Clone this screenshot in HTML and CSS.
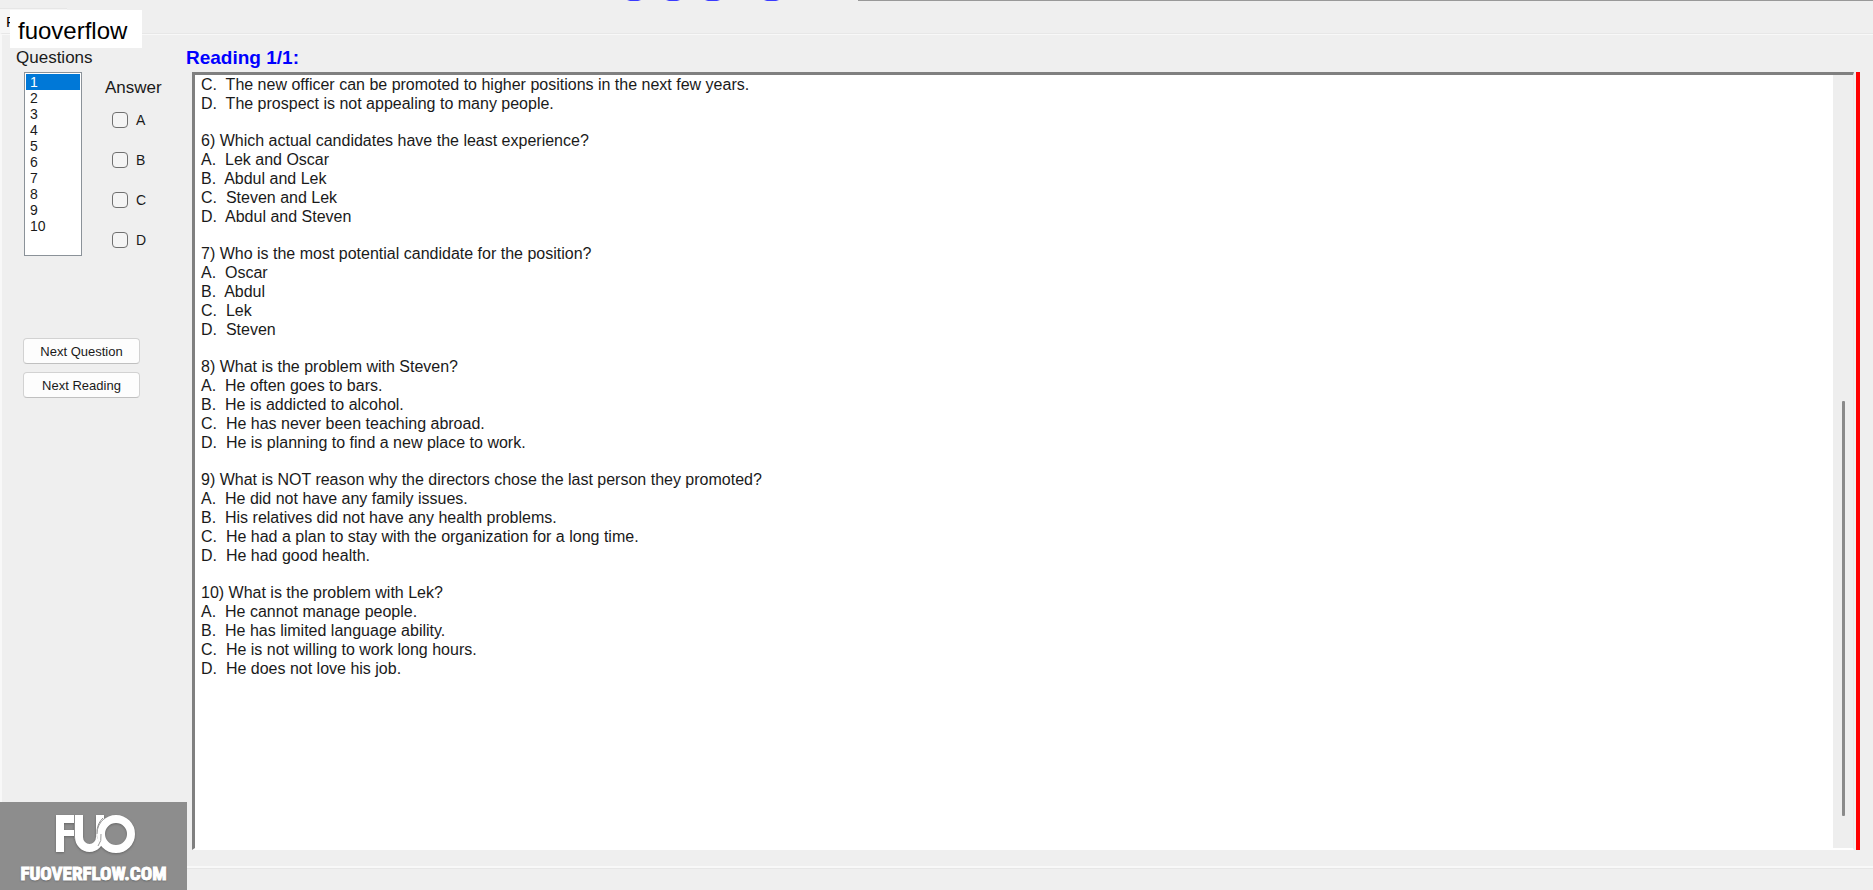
FILE: index.html
```
<!DOCTYPE html>
<html lang="en">
<head>
<meta charset="utf-8">
<title>Reading 1/1</title>
<link rel="stylesheet" href="styles.css">
</head>
<body>
<div class="app">
  <header class="tabs">
    <svg class="clipped-code" width="160" height="2" viewBox="0 0 160 2" aria-hidden="true">
      <g fill="#3a3aff"><path d="M0 0h14l-3 1H3z"/><path d="M39 0h14l-3 1h-8z"/><path d="M78 0h15l-3 1h-9z"/><path d="M137 0h15l-3 1h-9z"/></g>
    </svg>
    <div class="top-rule"></div>
    <button class="tab" type="button">R</button>
    <div class="tag">fuoverflow</div>
  </header>
  <main class="page">
    <aside class="side">
      <label class="heading" for="questions">Questions</label>
      <div class="picker">
        <select class="list" id="questions" size="10">
          <option selected>1</option><option>2</option><option>3</option><option>4</option><option>5</option><option>6</option><option>7</option><option>8</option><option>9</option><option>10</option>
        </select>
        <fieldset class="answers">
          <legend class="heading">Answer</legend>
          <label class="choice"><input type="checkbox">A</label>
          <label class="choice"><input type="checkbox">B</label>
          <label class="choice"><input type="checkbox">C</label>
          <label class="choice"><input type="checkbox">D</label>
        </fieldset>
      </div>
      <div class="actions">
        <button class="btn" type="button">Next Question</button>
        <button class="btn" type="button">Next Reading</button>
      </div>
    </aside>
    <section class="reading">
      <h1 class="title">Reading 1/1:</h1>
      <div class="frame">
        <div class="box">
          <div class="text">
            <p>C.&nbsp; The new officer can be promoted to higher positions in the next few years.<br>D.&nbsp; The prospect is not appealing to many people.</p>
            <p>6) Which actual candidates have the least experience?<br>A.&nbsp; Lek and Oscar<br>B.&nbsp; Abdul and Lek<br>C.&nbsp; Steven and Lek<br>D.&nbsp; Abdul and Steven</p>
            <p>7) Who is the most potential candidate for the position?<br>A.&nbsp; Oscar<br>B.&nbsp; Abdul<br>C.&nbsp; Lek<br>D.&nbsp; Steven</p>
            <p>8) What is the problem with Steven?<br>A.&nbsp; He often goes to bars.<br>B.&nbsp; He is addicted to alcohol.<br>C.&nbsp; He has never been teaching abroad.<br>D.&nbsp; He is planning to find a new place to work.</p>
            <p>9) What is NOT reason why the directors chose the last person they promoted?<br>A.&nbsp; He did not have any family issues.<br>B.&nbsp; His relatives did not have any health problems.<br>C.&nbsp; He had a plan to stay with the organization for a long time.<br>D.&nbsp; He had good health.</p>
            <p>10) What is the problem with Lek?<br>A.&nbsp; He cannot manage people.<br>B.&nbsp; He has limited language ability.<br>C.&nbsp; He is not willing to work long hours.<br>D.&nbsp; He does not love his job.</p>
          </div>
          <div class="track"><div class="thumb"></div></div>
        </div>
        <div class="marker"></div>
      </div>
    </section>
  </main>
  <footer class="bottom"></footer>
  <div class="watermark">
    <svg class="logo" width="82" height="42" viewBox="0 0 82 42" role="img" aria-label="FUO">
      <path d="M3 2h19v8H11v7h11v6H11v16H3z" fill="#fff"/>
      <g fill="none" stroke="#fff" stroke-width="8">
        <path d="M26 2v22a10.500 11 0 0 0 21 0V2"/>
      </g>
      <path d="M21.500 2v24M50 5a20 20 0 0 0-3 25" fill="none" stroke="#8d8d8d"/>
      <circle cx="63" cy="21" r="15" fill="none" stroke="#fff" stroke-width="8"/>
      <path d="M52 5q-8 6-8 16M48 21q1 7-3 12" fill="none" stroke="#9a9a9a"/>
    </svg>
    <div class="site">FUOVERFLOW.COM</div>
  </div>
</div>
</body>
</html>
```
FILE: styles.css
```
* { box-sizing: border-box; }
body {
  margin: 0;
  background: #efefef;
  color: #1a1a1a;
  font-family: "Liberation Sans", Arial, sans-serif;
  font-size: 16px;
}
.app {
  position: relative;
  display: flex;
  flex-direction: column;
  min-height: 100vh;
}
.tabs {
  position: relative;
  height: 33px;
  padding-top: 8px;
}
.clipped-code { position: absolute; left: 627px; top: 0; }
.top-rule {
  position: absolute;
  left: 858px;
  right: 0;
  top: 0;
  height: 1px;
  background: #999;
}
.tab {
  width: 67px;
  height: 25px;
  padding: 0 0 0 6px;
  border: 0;
  border-top: 1px solid #e6e6e6;
  background: #f6f6f6;
  font: 15px "Liberation Sans", Arial, sans-serif;
  text-align: left;
  overflow: hidden;
}
.tag {
  position: absolute;
  left: 10px;
  top: 10px;
  z-index: 1;
  padding: 4px 15px 0 8px;
  background: #fff;
  color: #000;
  font-size: 24px;
  line-height: 34px;
}
.page {
  flex: 1;
  display: flex;
  padding-top: 14px;
  border-top: 1px solid #e7e7e7;
  border-left: 2px solid #f8f8f8;
  box-shadow: inset 0 1px #f8f8f8;
}
.side {
  flex: none;
  width: 184px;
  padding-left: 14px;
}
.heading {
  display: block;
  padding: 0;
  font-size: 17px;
  line-height: 20px;
}
.picker {
  display: flex;
  gap: 23px;
  padding: 4px 0 0 8px;
}
.list {
  width: 58px;
  height: 184px;
  padding: 1px;
  border: 1px solid #8b9299;
  border-radius: 0;
  background: #fff;
  color: #1a1a1a;
  font: 14px "Liberation Sans", Arial, sans-serif;
  overflow: hidden;
}
.list option {
  min-height: 16px;
  padding: 0 0 0 4px;
}
.list option:checked {
  background: #0078d7 linear-gradient(#0078d7, #0078d7);
  -webkit-text-fill-color: #fff;
}
.answers {
  margin: 0;
  padding: 2px 0 0;
  border: 0;
}
.answers .heading { padding-top: 6px; }
.choice {
  display: flex;
  align-items: center;
  gap: 8px;
  height: 40px;
  padding-left: 7px;
  font-size: 14px;
}
.choice input {
  appearance: none;
  width: 16px;
  height: 16px;
  margin: 0;
  border: 1px solid #707070;
  border-radius: 4px;
  background: #f4f4f4;
}
.actions {
  display: flex;
  flex-direction: column;
  gap: 8px;
  width: 124px;
  padding: 78px 0 0 7px;
}
.btn {
  height: 26px;
  padding: 0;
  border: 1px solid #d2d2d2;
  border-bottom-color: #c0c0c0;
  border-radius: 4px;
  background: #fdfdfd;
  color: #1a1a1a;
  font: 13px "Liberation Sans", Arial, sans-serif;
}
.reading {
  flex: 1;
  display: flex;
  flex-direction: column;
  padding-right: 13px;
}
.title {
  margin: 0;
  color: #00f;
  font-size: 19px;
  line-height: 20px;
}
.frame {
  flex: 1;
  display: flex;
  gap: 2px;
  padding: 4px 0 0 6px;
}
.box {
  flex: 1;
  display: flex;
  border: 2px solid #808080;
  border-width: 3px 1px 2px 3px;
  border-color: #808080 #e8e8e8 #fff #808080;
  background: #fff;
}
.text {
  flex: 1;
  padding-left: 6px;
  line-height: 19px;
}
.text p { margin: 0 0 18px; }
.track {
  display: flex;
  flex-direction: column;
  align-items: center;
  width: 20px;
  background: #eee;
}
.track::before { content: ""; flex: 326; }
.track::after { content: ""; flex: 32; }
.thumb {
  flex: 414;
  width: 3px;
  border-radius: 1px;
  background: #8a8a8a;
}
.marker { width: 4px; background: #f00; }
.bottom {
  height: 40px;
  background: linear-gradient(#efefef 16px, #f8f8f8 16px, #f8f8f8 18px, #e6e6e6 18px, #e6e6e6 19px, #efefef 19px);
}
.watermark {
  position: absolute;
  left: 0;
  bottom: 0;
  display: flex;
  flex-direction: column;
  align-items: center;
  gap: 8px;
  width: 187px;
  height: 88px;
  padding-top: 11px;
  background: #8d8d8d;
  color: #fff;
}
.logo { filter: drop-shadow(0 1px 1px #666); }
.site {
  font: bold 19px/22px "Liberation Sans Narrow", "Roboto Condensed", "Open Sans Condensed", "DejaVu Sans Condensed", sans-serif;
  -webkit-text-stroke: 1px #fff;
  text-shadow: 0 1px 2px #555;
}
```
